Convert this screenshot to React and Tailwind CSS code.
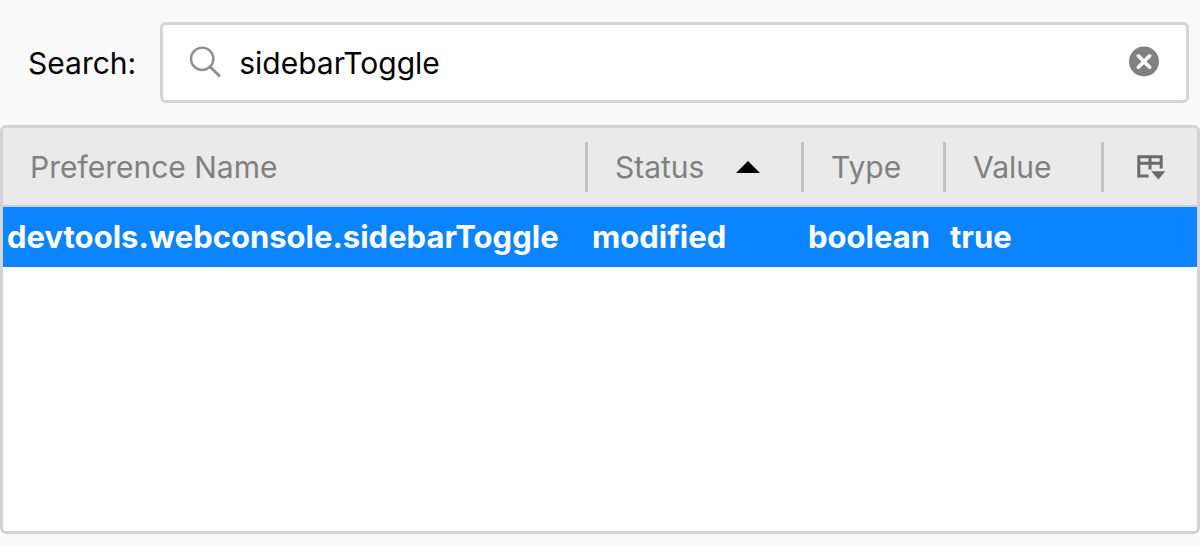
import React, { useState } from 'react'

const prefs = [
  { name: 'devtools.webconsole.sidebarToggle', status: 'modified', type: 'boolean', value: 'true' },
]

function SearchIcon() {
  return (
    <svg className="h-8 w-8 shrink-0 overflow-visible" viewBox="0 0 32 32" fill="none" stroke="#8e8e8e" strokeWidth="2.4" aria-hidden="true">
      <circle cx="13.2" cy="11.8" r="11.2" />
      <path d="M21 19.8 31 29.6" strokeWidth="2.8" />
    </svg>
  )
}

function ClearIcon() {
  return (
    <svg className="h-8 w-8 overflow-visible" viewBox="0 0 32 32" aria-hidden="true">
      <circle cx="16" cy="14.5" r="15" fill="#808080" />
      <path d="M10.3 8.8 21.7 20.2M21.7 8.8 10.3 20.2" stroke="#fff" strokeWidth="3.6" strokeLinecap="round" />
    </svg>
  )
}

function ColumnPickerIcon() {
  return (
    <svg className="h-7 w-8" viewBox="0 0 32 28" aria-hidden="true">
      <g fill="none" stroke="#6b6b6b" strokeWidth="3">
        <path d="M13.5 23H3.8V3.8h22.4v11.7" />
        <path d="M3.8 10.2h22.4M15 3.8v12.7" />
      </g>
      <path d="M16.2 18.2h14.2l-7.1 8.3z" fill="#6b6b6b" />
    </svg>
  )
}

function HeaderCell({ className, children }) {
  return (
    <th scope="col" className={`p-0 text-left font-normal ${className}`}>
      <div className="flex h-[50px] items-center border-r-3 border-[#c1c1c1] pl-[27px]">{children}</div>
    </th>
  )
}

export default function App() {
  const [query, setQuery] = useState('sidebarToggle')

  return (
    <div className="flex min-h-screen flex-col bg-[#f9f9fa] pb-[11px] font-['Inter',sans-serif] text-[30px] leading-9 text-black">
      <div className="flex items-center gap-6 pt-[22px] pr-[11px] pb-[22px] pl-7">
        <label htmlFor="search">Search:</label>
        <div className="flex h-[81px] flex-1 items-center rounded-md border-3 border-[#d4d4d8] bg-white pr-[26px] pl-[26px]">
          <SearchIcon />
          <input
            id="search"
            type="text"
            value={query}
            onChange={(e) => setQuery(e.target.value)}
            className="ml-[18px] min-w-0 flex-1 bg-transparent outline-none"
          />
          <button type="button" aria-label="Clear" onClick={() => setQuery('')}>
            <ClearIcon />
          </button>
        </div>
      </div>

      <main className="flex-1 overflow-hidden rounded-md border-3 border-[#d4d4d8] bg-white">
        <table className="w-full table-fixed border-collapse">
          <thead className="bg-[#eaeaea] text-[#808080]">
            <tr className="h-[78px] border-b-2 border-[#d1cfcf]">
              <HeaderCell>Preference Name</HeaderCell>
              <HeaderCell className="w-[216px]">
                Status
                <svg className="ml-8 h-3 w-6" viewBox="0 0 24 12" aria-hidden="true">
                  <path d="M12 0 24 12H0z" fill="#000" />
                </svg>
              </HeaderCell>
              <HeaderCell className="w-[142px]">Type</HeaderCell>
              <HeaderCell className="w-[158px]">Value</HeaderCell>
              <th className="w-[93px] p-0">
                <button type="button" aria-label="Select columns" className="flex w-full justify-center">
                  <ColumnPickerIcon />
                </button>
              </th>
            </tr>
          </thead>
          <tbody>
            {prefs.map((p) => (
              <tr key={p.name} className="h-[61px] bg-[#0a84ff] text-[31px] font-[650] whitespace-nowrap text-white">
                <td className="p-0 pl-1">{p.name}</td>
                <td className="p-0 pl-1">{p.status}</td>
                <td className="p-0 pl-1">{p.type}</td>
                <td className="p-0 pl-1" colSpan={2}>{p.value}</td>
              </tr>
            ))}
          </tbody>
        </table>
      </main>
    </div>
  )
}
